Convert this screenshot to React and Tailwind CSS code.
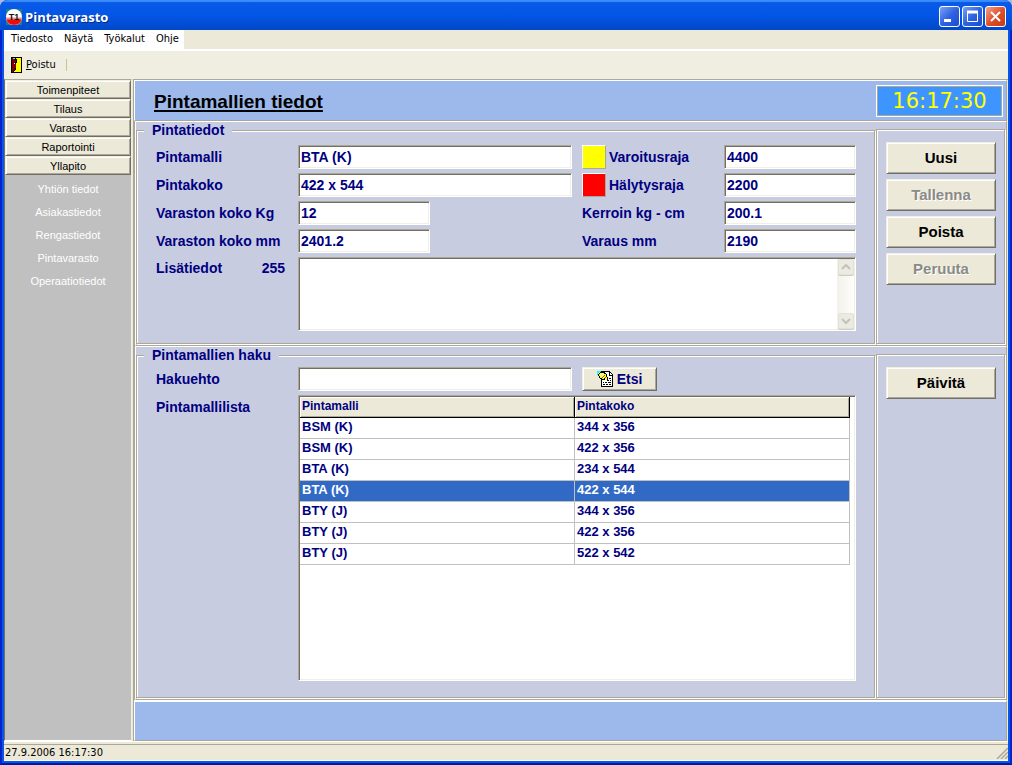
import React, { useState } from "react";

const menuItems = ["Tiedosto", "Näytä", "Työkalut", "Ohje"];
const sections = ["Toimenpiteet", "Tilaus", "Varasto", "Raportointi", "Yllapito"];
const subItems = ["Yhtiön tiedot", "Asiakastiedot", "Rengastiedot", "Pintavarasto", "Operaatiotiedot"];

const surfaces = [
  { model: "BSM (K)", size: "344 x 356" },
  { model: "BSM (K)", size: "422 x 356" },
  { model: "BTA (K)", size: "234 x 544" },
  { model: "BTA (K)", size: "422 x 544" },
  { model: "BTY (J)", size: "344 x 356" },
  { model: "BTY (J)", size: "422 x 356" },
  { model: "BTY (J)", size: "522 x 542" }
];

// Classic bevels shared by the controls
const sunken =
  "border border-t-[#aca899] border-l-[#aca899] border-b-white border-r-white bg-white shadow-[inset_1px_1px_0_#716f64,inset_-1px_-1px_0_#f1efe2]";
const raised =
  "border border-t-[#f1efe2] border-l-[#f1efe2] border-b-[#716f64] border-r-[#716f64] bg-[#ece9d8] shadow-[inset_1px_1px_0_#fff,inset_-1px_-1px_0_#aca899]";
const etched = "border border-[#aca899] shadow-[1px_1px_0_#fff,inset_1px_1px_0_#fff]";
const uiFont = "font-['DejaVu_Sans_Condensed','DejaVu_Sans',sans-serif]";

function AppLogo() {
  return (
    <svg width="16" height="16" viewBox="0 0 16 16">
      <rect width="16" height="16" fill="#1b7f86" />
      <circle cx="8" cy="8" r="8" fill="#fff" />
      <path d="M0 8.500h16a8 8 0 0 1-16 0z" fill="#f58a8a" />
      <path d="M0.500 10.500h15a8 8 0 0 1-15 0z" fill="#f00a0a" />
      <text x="8" y="10.500" textAnchor="middle" fontSize="9" fontWeight="bold" fontFamily="Liberation Sans, sans-serif" fill="#111">
        T1
      </text>
    </svg>
  );
}

function DoorIcon() {
  return (
    <svg width="11" height="16" viewBox="0 0 11 16" shapeRendering="crispEdges">
      <rect width="11" height="16" fill="#000" />
      <rect x="1" y="1" width="9" height="14" fill="#ff0" />
      <path d="M1 1h4v11H4v1H3v1H2v1H1z" fill="#800000" />
      <path d="M2 1h2v1H2z" fill="#0ff" />
      <path d="M4 1h1v2H4zM5 2h1v4H5zM4 5h1v2H4zM4 11h1v2H4zM3 13h1v1H3zM2 14h1v1H2z" fill="#000" />
      <path d="M3 6h1v1H3z" fill="#fff" />
    </svg>
  );
}

function SearchDocIcon() {
  return (
    <svg width="16" height="16" viewBox="0 0 16 16" shapeRendering="crispEdges">
      <path d="M4 0h9v1h1v1h1v1h1v13H4z" fill="#000" />
      <path d="M5 1h7v4h3v10H5z" fill="#fff" />
      <path d="M13 2h1v1h-1zM13 3h2v1h-2z" fill="#fff" />
      <path d="M6 13h2v1H6zM9 13h2v1H9zM12 13h2v1h-2zM6 11h1v1H6zM8 11h2v1H8zM11 11h3v1h-3zM11 9h1v1h-1zM13 9h1v1h-1zM12 7h2v1h-2z" fill="#000" />
      <path d="M0 0h4v1H2v1H1v2H0z" fill="#0ff" />
      <path d="M3 1h5v1h1v1h1v3h1v3h1v1h-2v-1H9V8H8v1H5V8H3V7H2V5H1V3h1V2h1z" fill="#000" />
      <path d="M3 2h4v1h2v3h1v3H9V8H8V7H7v1H5V7H3V5H2V3h1z" fill="#ff0" />
      <path d="M3 2h1v1H3zM5 2h1v1H5zM4 3h1v1H4zM6 3h1v1H6zM3 4h1v1H3zM5 4h1v1H5zM4 5h1v1H4zM6 6h1v1H6z" fill="#fff" />
      <path d="M7 4h1v1H7zM6 5h1v1H6zM5 6h1v1H5zM8 6h1v1H8z" fill="#807800" />
    </svg>
  );
}

function TitleButton({ label, close, children }) {
  return (
    <button
      type="button"
      aria-label={label}
      className={
        "flex size-[21px] items-center justify-center rounded-[3px] border border-white " +
        (close
          ? "bg-linear-to-br from-[#f0a088] via-[#e0502c] to-[#c43a14]"
          : "bg-linear-to-br from-[#7ca0f4] via-[#2f62e0] to-[#1c4cd0]")
      }
    >
      <svg width="19" height="19" viewBox="0 0 19 19" fill="none" stroke="#fff">
        {children}
      </svg>
    </button>
  );
}

function Field({ id, value, onChange, className = "" }) {
  return (
    <input
      id={id}
      type="text"
      value={value}
      onChange={onChange}
      className={`h-6 min-w-0 px-[2px] text-sm font-bold text-[#000080] outline-none ${sunken} ${className}`}
    />
  );
}

function PanelButton({ children, disabled }) {
  return (
    <button
      type="button"
      disabled={disabled}
      className={`h-8 w-full text-[15px] font-bold text-black disabled:text-[#8a8a86] disabled:[text-shadow:1px_1px_0_#fff] ${raised}`}
    >
      {children}
    </button>
  );
}

function ScrollButton({ d }) {
  return (
    <button type="button" tabIndex={-1} disabled aria-label="Vieritä" className="flex size-4 items-center justify-center rounded-[2px] border border-[#e4e2d6] bg-[#ecebe3] shadow-[0_1px_0_#cfcdbf]">
      <svg width="10" height="8" viewBox="0 0 10 8" fill="none" stroke="#c4c2b8" strokeWidth="2">
        <path d={d} />
      </svg>
    </button>
  );
}

export default function App() {
  const [form, setForm] = useState({
    model: "BTA (K)",
    size: "422 x 544",
    kg: "12",
    mm: "2401.2",
    warn: "4400",
    alarm: "2200",
    factor: "200.1",
    reserve: "2190",
    notes: "",
    query: ""
  });
  const [selected, setSelected] = useState(3);

  const set = (key) => (e) => setForm({ ...form, [key]: e.target.value });

  return (
    <div className="min-h-screen bg-[#a9b8e4] font-['Liberation_Sans',Arial,sans-serif]">
      <div className="flex min-h-screen flex-col overflow-hidden rounded-t-lg bg-[#0831c0]">
        <header className="flex h-[30px] shrink-0 items-center bg-linear-to-b from-[#0a5ae8] via-[#0356e6] to-[#0148c8] pr-[6px] pl-[6px] shadow-[inset_0_2px_1px_#3b8dfa]">
          <div className="pt-[3px]">
            <AppLogo />
          </div>
          <h1 className="ml-[3px] flex-1 pt-[5px] font-['Open_Sans','Noto_Sans',sans-serif] text-[13px] font-bold text-white [text-shadow:1px_1px_0_#0a2a80]">
            Pintavarasto
          </h1>
          <div className="flex gap-[2px] pt-[3px]">
            <TitleButton label="Pienennä">
              <path d="M4 13.500h7" strokeWidth="3" />
            </TitleButton>
            <TitleButton label="Suurenna">
              <path d="M4.500 4v10.500h10V4" />
              <path d="M4 5h11" strokeWidth="3" />
            </TitleButton>
            <TitleButton label="Sulje" close>
              <path d="M5 5l9 9M14 5l-9 9" strokeWidth="2" />
            </TitleButton>
          </div>
        </header>

        <div className="flex flex-1 flex-col border-x-2 border-b-2 border-x-[#0a22cc] border-b-[#001a9c] bg-[#0855e6] px-[2px] pb-[2px]">
          <div className="flex flex-1 flex-col bg-[#ece9d8]">
            <nav className={`flex h-[21px] border-b-2 border-white text-[11px] text-black ${uiFont}`}>
              <div className="flex bg-white pl-px">
                {menuItems.map((item) => (
                  <button key={item} type="button" className="px-[6px] -ml-px first:ml-0 last:pr-[5px]">
                    {item}
                  </button>
                ))}
              </div>
            </nav>

            <div className={`flex h-7 items-center bg-[#f0eee1] pl-[7px] text-[11px] text-black ${uiFont}`}>
              <button type="button" className="flex items-center gap-1">
                <DoorIcon />
                <span>
                  <span className="underline">P</span>oistu
                </span>
              </button>
              <span className="ml-[10px] h-3 w-px bg-[#c9c292]" />
            </div>

            <div className="flex flex-1">
              <aside className="flex w-32 shrink-0 flex-col border border-t-[#aca899] border-l-[#716f64] border-r-[#f1efe2] border-b-white bg-[#c0c0c0] text-[11px]">
                {sections.map((s) => (
                  <button key={s} type="button" className={`h-[19px] leading-4 text-black ${raised}`}>
                    {s}
                  </button>
                ))}
                <ul className="flex flex-col pt-[3px] text-center text-white">
                  {subItems.map((s) => (
                    <li key={s}>
                      <a href="#" className="block h-[23px] leading-[23px]">
                        {s}
                      </a>
                    </li>
                  ))}
                </ul>
              </aside>

              <main className="ml-px flex min-w-0 flex-1 flex-col border-t border-l border-[#aca899]">
                <div className="mr-px flex h-[41px] items-center border border-t-white border-l-white border-r-[#aca899] border-b-[#aca899] bg-[#9db8eb] pr-[3px] pl-[19px]">
                  <h2 className="flex-1 pt-[3px] text-[19px] font-bold text-black underline decoration-2 underline-offset-2">
                    Pintamallien tiedot
                  </h2>
                  <div className="flex h-8 w-[127px] items-center justify-center border border-white bg-[#3f95ff] pt-[2px] font-['DejaVu_Sans',Verdana,sans-serif] text-[21px] text-[#ff0] shadow-[inset_1px_1px_0_#aca899,inset_-1px_-1px_0_#aca899]">
                    16:17:30
                  </div>
                </div>

                <div className="flex flex-1 flex-col border-l border-[#aca899] text-sm font-bold text-[#000080]">
                  <section className="mr-px flex border border-t-white border-l-white border-r-[#aca899] border-b-[#aca899] bg-[#c8cce1] pr-px pb-px">
                    <fieldset className={`min-w-0 flex-1 pr-[18px] pb-3 pl-[19px] ${etched}`}>
                      <legend className="-ml-[12px] h-4 bg-[#c8cce1] px-2 leading-4">Pintatiedot</legend>
                      <div className="grid grid-cols-[142px_minmax(0,1fr)_142px_132px] items-center gap-y-1 pt-[7px]">
                        <label htmlFor="model">Pintamalli</label>
                        <Field id="model" value={form.model} onChange={set("model")} className="mr-[10px]" />
                        <label htmlFor="warn" className="flex items-center gap-[3px]">
                          <span className="size-6 border border-t-white border-l-white border-r-[#aca899] border-b-[#aca899] bg-[#ff0]" />
                          Varoitusraja
                        </label>
                        <Field id="warn" value={form.warn} onChange={set("warn")} />

                        <label htmlFor="size">Pintakoko</label>
                        <Field id="size" value={form.size} onChange={set("size")} className="mr-[10px]" />
                        <label htmlFor="alarm" className="flex items-center gap-[3px]">
                          <span className="size-6 border border-t-white border-l-white border-r-[#aca899] border-b-[#aca899] bg-[#f00]" />
                          Hälytysraja
                        </label>
                        <Field id="alarm" value={form.alarm} onChange={set("alarm")} />

                        <label htmlFor="kg">Varaston koko Kg</label>
                        <Field id="kg" value={form.kg} onChange={set("kg")} className="w-[132px]" />
                        <label htmlFor="factor">Kerroin kg - cm</label>
                        <Field id="factor" value={form.factor} onChange={set("factor")} />

                        <label htmlFor="mm">Varaston koko mm</label>
                        <Field id="mm" value={form.mm} onChange={set("mm")} className="w-[132px]" />
                        <label htmlFor="reserve">Varaus mm</label>
                        <Field id="reserve" value={form.reserve} onChange={set("reserve")} />

                        <div className="flex justify-between self-start pt-px pr-[13px]">
                          <label htmlFor="notes">Lisätiedot</label>
                          <span>{255 - form.notes.length}</span>
                        </div>
                        <div className={`col-span-3 flex h-[74px] p-px ${sunken}`}>
                          <textarea
                            id="notes"
                            maxLength={255}
                            value={form.notes}
                            onChange={set("notes")}
                            className="h-full min-w-0 flex-1 resize-none px-[2px] outline-none"
                          />
                          <div className="flex w-[17px] flex-col items-center justify-between bg-linear-to-r from-[#f2f1ea] to-[#fefefb]">
                            <ScrollButton d="M1 6l4-4 4 4" />
                            <ScrollButton d="M1 2l4 4 4-4" />
                          </div>
                        </div>
                      </div>
                    </fieldset>
                    <div className={`mt-[7px] ml-px flex w-[129px] shrink-0 flex-col gap-[5px] pt-3 pr-2 pl-[9px] ${etched}`}>
                      <PanelButton>Uusi</PanelButton>
                      <PanelButton disabled>Tallenna</PanelButton>
                      <PanelButton>Poista</PanelButton>
                      <PanelButton disabled>Peruuta</PanelButton>
                    </div>
                  </section>

                  <section className="mr-px flex flex-1 border border-t-white border-l-white border-r-[#aca899] border-b-[#aca899] bg-[#c8cce1] pr-px pb-px">
                    <fieldset className={`flex min-w-0 flex-1 flex-col pr-[18px] pb-4 pl-[19px] ${etched}`}>
                      <legend className="-ml-[12px] h-4 bg-[#c8cce1] px-2 leading-4">Pintamallien haku</legend>
                      <div className="grid flex-1 grid-cols-[142px_minmax(0,1fr)_142px_132px] grid-rows-[24px_1fr] items-center gap-y-1 pt-1">
                        <label htmlFor="query">Hakuehto</label>
                        <Field id="query" value={form.query} onChange={set("query")} className="mr-[10px]" />
                        <button type="button" className={`flex h-6 w-[75px] items-center justify-center gap-1 ${raised}`}>
                          <SearchDocIcon />
                          Etsi
                        </button>
                        <span />

                        <span className="self-start pt-[2px]">Pintamallilista</span>
                        <div className={`col-span-3 h-full p-px pr-[5px] ${sunken}`}>
                          <table className="w-full table-fixed border-separate border-spacing-0 text-left text-[13px] leading-4">
                            <thead>
                              <tr>
                                {["Pintamalli", "Pintakoko"].map((h) => (
                                  <th
                                    key={h}
                                    className="h-[21px] border-r border-b border-black bg-[#ece9d8] px-[2px] pb-[2px] text-xs shadow-[inset_1px_1px_0_#fff,inset_-1px_-1px_0_#aca899]"
                                  >
                                    {h}
                                  </th>
                                ))}
                              </tr>
                            </thead>
                            <tbody>
                              {surfaces.map((row, i) => (
                                <tr
                                  key={i}
                                  onClick={() => setSelected(i)}
                                  className={i === selected ? "bg-[#316ac5] text-white" : ""}
                                >
                                  <td className="h-[21px] border-r border-b border-[#c0c0c0] px-[2px] pb-[2px]">{row.model}</td>
                                  <td className="h-[21px] border-r border-b border-[#c0c0c0] px-[2px] pb-[2px]">{row.size}</td>
                                </tr>
                              ))}
                            </tbody>
                          </table>
                        </div>
                      </div>
                    </fieldset>
                    <div className={`mt-[7px] ml-px w-[129px] shrink-0 pt-3 pr-2 pl-[9px] ${etched}`}>
                      <PanelButton>Päivitä</PanelButton>
                    </div>
                  </section>
                </div>

                <div className="mr-px h-[41px] border border-t-2 border-t-white border-l-white border-r-[#aca899] border-b-[#aca899] bg-[#9db8eb]" />
              </main>
            </div>

            <footer className="border-t border-b border-white pt-[2px]">
              <div className={`flex h-4 items-center justify-between border-t border-[#aca899] pl-px text-[11px] text-black ${uiFont}`}>
                <span className="pt-[2px]">27.9.2006 16:17:30</span>
                <svg width="12" height="12" viewBox="0 0 12 12" stroke="#aca899" strokeWidth="1.500">
                  <path d="M1 12L12 1M5 12l7-7M9 12l3-3" />
                </svg>
              </div>
            </footer>
          </div>
        </div>
      </div>
    </div>
  );
}
